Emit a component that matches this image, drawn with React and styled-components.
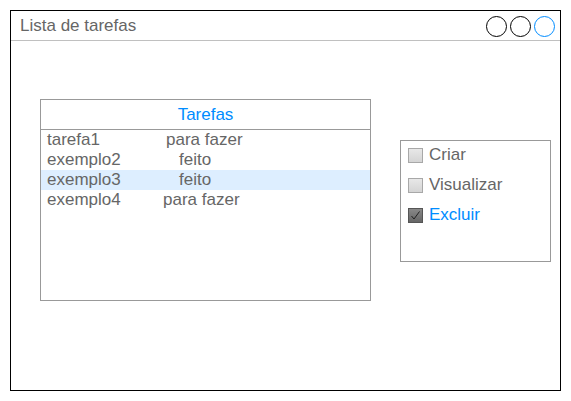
import React from 'react';
import styled, { createGlobalStyle } from 'styled-components';

const tasks = [
  { name: 'tarefa1', status: 'para fazer', offset: 3 },
  { name: 'exemplo2', status: 'feito', offset: 16 },
  { name: 'exemplo3', status: 'feito', offset: 16, selected: true },
  { name: 'exemplo4', status: 'para fazer', offset: 0 },
];

const options = [
  { label: 'Criar', checked: false },
  { label: 'Visualizar', checked: false },
  { label: 'Excluir', checked: true },
];

const App = () => (
  <>
    <GlobalStyle />
    <Window>
      <TitleBar>
        <Title>Lista de tarefas</Title>
        <Controls>
          <Circle />
          <Circle />
          <Circle $active />
        </Controls>
      </TitleBar>
      <Body>
        <ListPanel>
          <ListHeader>Tarefas</ListHeader>
          {tasks.map((t) => (
            <Row key={t.name} $selected={t.selected}>
              <Name>{t.name}</Name>
              <Status $offset={t.offset}>{t.status}</Status>
            </Row>
          ))}
        </ListPanel>
        <CheckPanel>
          {options.map((o) => (
            <CheckRow key={o.label}>
              <Box $checked={o.checked}>
                {o.checked && (
                  <svg width="11" height="11" viewBox="0 0 11 11">
                    <path d="M1.5 6 L4 9 L9.5 1.5" fill="none" stroke="#222" strokeWidth="1" />
                  </svg>
                )}
              </Box>
              <Label $checked={o.checked}>{o.label}</Label>
            </CheckRow>
          ))}
        </CheckPanel>
      </Body>
    </Window>
  </>
);

const GlobalStyle = createGlobalStyle`
  body {
    margin: 0;
    background: #fff;
    font-family: "Liberation Sans", Arial, sans-serif;
  }
`;

const Window = styled.div`
  box-sizing: border-box;
  margin: 10px;
  width: 551px;
  height: 381px;
  border: 1px solid #000;
  display: flex;
  flex-direction: column;
`;

const TitleBar = styled.div`
  height: 29px;
  border-bottom: 1px solid #c0c0c0;
  display: flex;
  align-items: center;
  justify-content: space-between;
  padding: 0 5px 0 9px;
`;

const Title = styled.div`
  font-size: 17px;
  color: #666;
  padding-top: 1px;
`;

const Controls = styled.div`
  display: flex;
  gap: 3px;
  padding-top: 1px;
`;

const Circle = styled.div`
  box-sizing: border-box;
  width: 21px;
  height: 21px;
  border-radius: 50%;
  border: 1.3px solid ${(p) => (p.$active ? '#008cff' : '#000')};
`;

const Body = styled.div`
  display: flex;
  align-items: flex-start;
  padding: 58px 0 0 29px;
  gap: 29px;
`;

const ListPanel = styled.div`
  box-sizing: border-box;
  width: 331px;
  height: 202px;
  border: 1px solid #999;
`;

const ListHeader = styled.div`
  height: 29px;
  border-bottom: 1px solid #999;
  display: flex;
  align-items: center;
  justify-content: center;
  color: #008cff;
  font-size: 17px;
`;

const Row = styled.div`
  height: 20px;
  display: flex;
  align-items: center;
  padding-left: 6px;
  font-size: 17px;
  color: #666;
  background: ${(p) => (p.$selected ? '#ddeeff' : 'transparent')};
`;

const Name = styled.span`
  width: 116px;
`;

const Status = styled.span`
  padding-left: ${(p) => p.$offset}px;
`;

const CheckPanel = styled.div`
  box-sizing: border-box;
  margin-top: 41px;
  width: 151px;
  height: 122px;
  border: 1px solid #999;
  padding: 3px 7px;
`;

const CheckRow = styled.div`
  height: 22px;
  margin-bottom: 8px;
  display: flex;
  align-items: center;
  gap: 6px;
`;

const Box = styled.div`
  box-sizing: border-box;
  width: 15px;
  height: 15px;
  border: 1px solid ${(p) => (p.$checked ? '#555' : '#a8a8a8')};
  background: ${(p) =>
    p.$checked
      ? 'linear-gradient(#888, #666)'
      : 'linear-gradient(#e8e8e8, #d4d4d4)'};
  display: flex;
  align-items: center;
  justify-content: center;
`;

const Label = styled.span`
  font-size: 17px;
  color: ${(p) => (p.$checked ? '#008cff' : '#666')};
`;

export default App;
